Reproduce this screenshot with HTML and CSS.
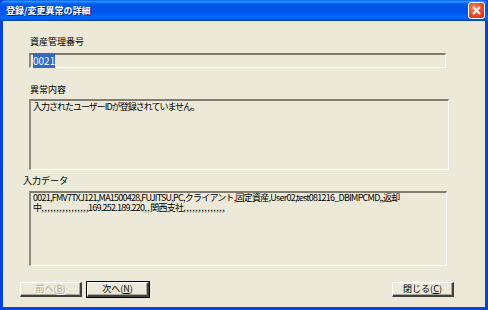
FILE: index.html
```html
<!DOCTYPE html>
<html lang="ja">
<head>
    <meta charset="UTF-8">
    <title>登録/変更異常の詳細</title>
    <link rel="stylesheet" href="styles.css">
</head>
<body>
    <div class="window">
        <div class="titlebar">
            <span class="title">登録/変更異常の詳細</span>
            <span class="close-btn">
                <svg width="9" height="9" viewBox="0 0 9 9"><path d="M1 1 L8 8 M8 1 L1 8" stroke="#fff" stroke-width="1.8"/></svg>
            </span>
        </div>
        <div class="client">
            <div class="label">資産管理番号</div>
            <div class="field field-id"><span class="selected">0021</span></div>

            <div class="label label-error">異常内容</div>
            <div class="field field-error">入力されたユーザーIDが登録されていません。</div>

            <div class="label label-data">入力データ</div>
            <div class="field field-data">0021,FMV7TXJ121,MA1500428,FUJITSU,PC,クライアント,固定資産,User02,test081216_DBIMPCMD,,返却<br>中<span class="blank">,,,,,,,,,,,,,,,</span>,169.252.189.220<span class="blank">,,</span>関西支社<span class="blank">,,,,,,,,,,,,,</span>,</div>

            <div class="buttons">
                <button class="btn" disabled>前へ(<u>B</u>)</button>
                <button class="btn btn-default">次へ(<u>N</u>)</button>
                <span class="spacer"></span>
                <button class="btn">閉じる(<u>C</u>)</button>
            </div>
        </div>
    </div>
</body>
</html>
```

FILE: styles.css
```css
body {
    margin: 0;
    padding: 0;
    font-family: "Noto Sans CJK JP", sans-serif;
    font-size: 9px;
    background: #ece9d8;
}
.window {
    width: 488px;
    height: 310px;
    box-sizing: border-box;
    display: flex;
    flex-direction: column;
    background: #0842d9;
    padding: 0 3px 3px 3px;
}
.titlebar {
    height: 21px;
    margin: 0 -3px;
    padding: 0 3px 0 6px;
    display: flex;
    align-items: center;
    justify-content: space-between;
    border-radius: 6px 6px 0 0;
    background: linear-gradient(to bottom, #0058ee 0%, #3593ff 6%, #127dff 12%, #0262ee 18%, #0057e5 26%, #0054e3 40%, #0055eb 60%, #005bf5 70%, #026afe 80%, #0062ef 88%, #0052d6 94%, #0040ab 100%);
}
.title {
    color: #fff;
    font-weight: bold;
    font-size: 9px;
    text-shadow: 1px 1px 0 #0a1e7a;
}
.close-btn {
    width: 15px;
    height: 15px;
    border: 1px solid #fff;
    border-radius: 3px;
    background: radial-gradient(circle at 40% 35%, #f08a6a, #e0492b 60%, #c2331c);
    display: flex;
    align-items: center;
    justify-content: center;
}
.client {
    flex: 1;
    background: #ece9d8;
    padding: 15px 0 0 26px;
    display: flex;
    flex-direction: column;
    align-items: flex-start;
}
.label {
    height: 12px;
    line-height: 12px;
    margin-left: 1px;
    color: #000;
}
.field {
    box-sizing: border-box;
    border-style: solid;
    border-width: 2px 1px 1px 2px;
    border-color: #7f7d72 #fff #fff #8e8c82;
    background: #ece9d8;
    color: #000;
    line-height: 10px;
    padding: 1px 2px;
}
.field-id {
    width: 417px;
    height: 15px;
    margin-top: 5px;
    font-size: 10px;
}
.selected {
    background: #316ac5;
    color: #fff;
}
.label-error {
    margin-top: 16px;
}
.field-error {
    width: 420px;
    height: 71px;
    margin-top: 3px;
    letter-spacing: -1px;
}
.label-data {
    margin-top: 5px;
    margin-left: -6px;
}
.field-data {
    width: 418px;
    height: 75px;
    margin-top: 4px;
    padding-top: 0;
    line-height: 10px;
    white-space: nowrap;
    letter-spacing: -0.75px;
}
.blank {
    letter-spacing: 0.5px;
}
.buttons {
    display: flex;
    align-items: center;
    width: 434px;
    margin-top: 16px;
    margin-left: -9px;
    gap: 5px;
}
.spacer {
    flex: 1;
}
.btn {
    width: 62px;
    height: 15px;
    padding: 0;
    font-family: inherit;
    font-size: 9px;
    line-height: 10px;
    color: #000;
    background: #ece9d8;
    border-style: solid;
    border-width: 1px 2px 2px 1px;
    border-color: #fff #404040 #404040 #fff;
    box-shadow: inset -1px -1px 0 #aca899;
}
.btn u {
    text-decoration: underline;
}
.btn:disabled {
    color: #aca899;
    text-shadow: 1px 1px 0 #fff;
}
.btn-default {
    outline: 1px solid #000;
}
```
